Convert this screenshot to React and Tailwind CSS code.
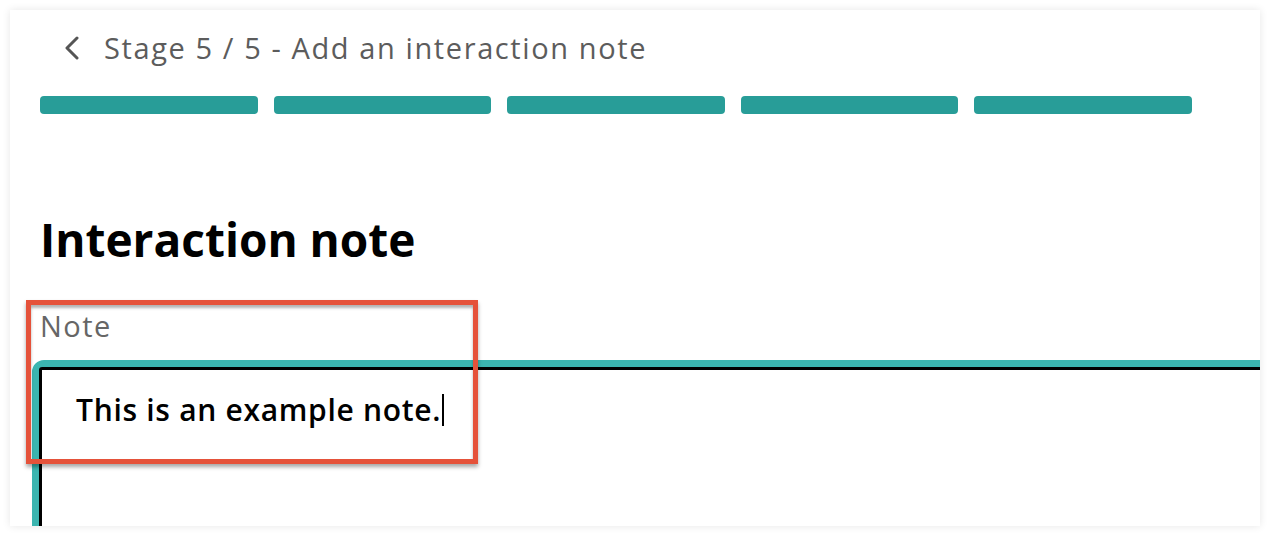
import React from 'react'

const font = { fontFamily: '"Open Sans", "Noto Sans", sans-serif' }

const App = () => {
  return (
    <div className="w-[1270px] h-[536px] bg-white p-[10px]" style={font}>
      <div className="relative w-[1250px] h-[516px] bg-white overflow-hidden shadow-[0_0_8px_rgba(0,0,0,0.1)]">
        <div className="pl-[30px] pt-[16px]">
          <div className="flex items-center h-[44px]">
            <svg className="ml-[24px] w-[16px] h-[24px]" viewBox="0 0 16 24" fill="none">
              <path d="M13 2 L3 12 L13 22" stroke="#555" strokeWidth="3" strokeLinecap="round" strokeLinejoin="round" />
            </svg>
            <p className="ml-[24px] text-[29px] text-[#5c5c5c] tracking-[1.6px]">Stage 5 / 5 - Add an interaction note</p>
          </div>
          <div className="flex gap-[16px] mt-[26px]">
            <div className="w-[218px] h-[18px] rounded-[4px] bg-[#289d98]"></div>
            <div className="w-[217px] h-[18px] rounded-[4px] bg-[#289d98]"></div>
            <div className="w-[218px] h-[18px] rounded-[4px] bg-[#289d98]"></div>
            <div className="w-[217px] h-[18px] rounded-[4px] bg-[#289d98]"></div>
            <div className="w-[218px] h-[18px] rounded-[4px] bg-[#289d98]"></div>
          </div>
          <h1 className="mt-[97px] text-[46px] leading-[56px] font-bold text-black">Interaction note</h1>
          <p className="mt-[43px] text-[29px] leading-[32px] text-[#666] tracking-[1.5px]">Note</p>
          <div className="ml-[-8px] mt-[18px] w-[1300px] h-[200px] border-[7px] border-[#3bb5b0] rounded-tl-[12px]">
            <div className="h-full border-[3px] border-black rounded-[3px] pl-[34px] pt-[20px]">
              <p className="text-[30px] leading-[40px] font-semibold text-black tracking-[0.7px] flex items-center">
                This is an example note.
                <span className="inline-block w-[2px] h-[32px] bg-black ml-[1px]"></span>
              </p>
            </div>
          </div>
        </div>
        <div className="absolute left-[16px] top-[290px] w-[452px] h-[164px] border-[5px] border-[#e5523a] shadow-[0_3px_4px_rgba(0,0,0,0.35),inset_0_3px_3px_rgba(0,0,0,0.3)]"></div>
      </div>
    </div>
  )
}

export default App
